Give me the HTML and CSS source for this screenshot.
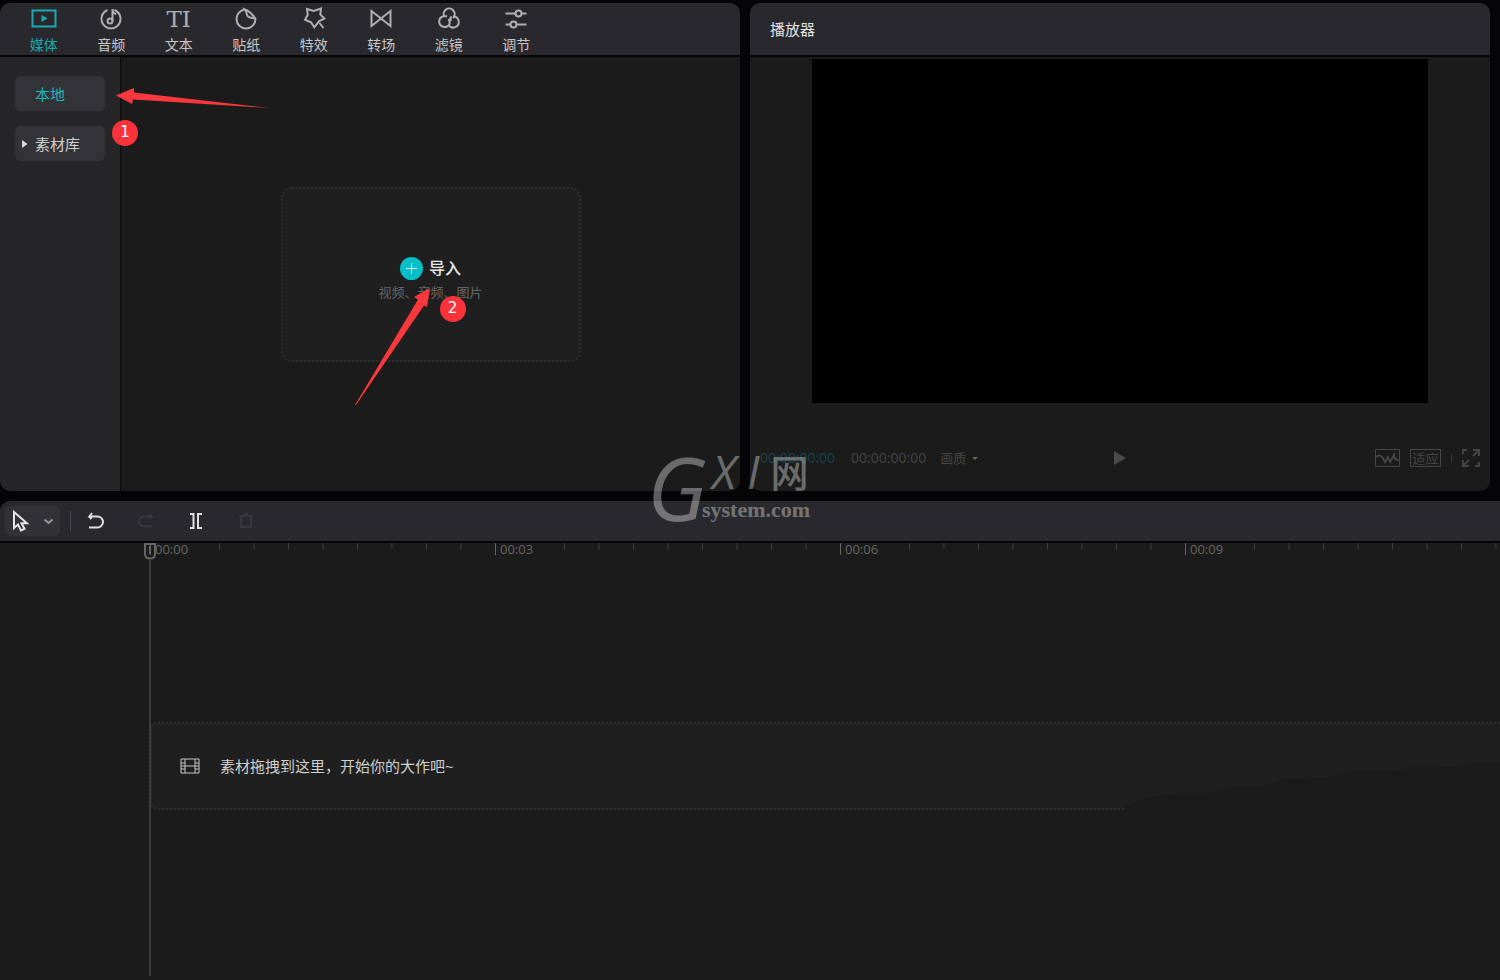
FILE: index.html
```html
<!DOCTYPE html>
<html lang="zh-CN">
<head>
<meta charset="utf-8">
<title>视频编辑器</title>
<link rel="stylesheet" href="styles.css">
</head>
<body>
<div class="app">
  <main class="workspace">
    <section class="panel">
      <nav class="tabs panel-head">
        <button class="tab tab-active"><svg width="26" height="26" viewBox="0 0 26 26"><rect x="1.500" y="4.500" width="23" height="16"/><path class="solid" d="M10.500 9v7l6-3.500z"/></svg>媒体</button>
        <button class="tab"><svg width="26" height="26" viewBox="0 0 26 26"><path d="M9.500 4A9.500 9.500 0 1 0 16.500 4"/><circle cx="12" cy="15" r="2.500"/><path d="M14.500 15V3c0 3 1.200 4.500 3.700 5"/></svg>音频</button>
        <button class="tab"><span class="glyph">TI</span>文本</button>
        <button class="tab"><svg width="26" height="26" viewBox="0 0 26 26"><path d="M12 3.500A9.500 9.500 0 1 0 22.500 13C20 9 16 5 12 3.500c2 2.500 1 5 3 7s5 1 7.500 2.500"/></svg>贴纸</button>
        <button class="tab"><svg width="26" height="26" viewBox="0 0 26 26"><path d="M6 3l6.700 2L20 2.500l-.7 6 4 4-5 2.500-5 6.300-3.300-5L4 13.700 6.700 9zM18.500 17l4 5"/></svg>特效</button>
        <button class="tab"><svg width="26" height="26" viewBox="0 0 26 26"><path d="M3.500 5v15L13 12.500zM22.500 5v15L13 12.500z"/></svg>转场</button>
        <button class="tab"><svg width="26" height="26" viewBox="0 0 26 26"><path d="M8.500 11a5.500 5.500 0 1 1 8.500 1M17 10.500a5.500 5.500 0 1 1-4.500 8.200M15 15c-1-2-.5-3.500.5-4.500M11 10.500a5.500 5.500 0 1 0 0 10c3-1.500 3.500-4.500 1.500-7.500"/></svg>滤镜</button>
        <button class="tab"><svg width="26" height="26" viewBox="0 0 26 26"><path d="M2.500 7.500h10M18.500 7.500h5M2.500 18.500h5M13.500 18.500h10"/><circle cx="15.500" cy="7.500" r="3"/><circle cx="10.500" cy="18.500" r="3"/></svg>调节</button>
      </nav>
      <div class="media">
        <aside class="sidebar">
          <button class="side-item side-active">本地</button>
          <button class="side-item"><svg class="side-caret" width="6" height="8" viewBox="0 0 6 8"><path d="M0 0v8l5.500-4z"/></svg>素材库</button>
          <svg class="arrow arrow-local" width="156" height="22" viewBox="0 0 156 22"><path d="M1 9.500L19 2v4.500L155 22 18 13.500 17 18z"/></svg>
          <span class="badge badge-one">1</span>
        </aside>
        <div class="media-stage">
          <div class="import-box">
            <button class="import"><svg width="23" height="23" viewBox="0 0 23 23"><circle cx="11.500" cy="11.500" r="11.500"/><path d="M11.500 6v11M6 11.500h11"/></svg>导入</button>
            <span class="hint">视频、音频、图片</span>
            <svg class="arrow arrow-import" width="76" height="118" viewBox="0 0 76 118"><path d="M75 0L59 9l4 2.500L0 117h1L69 17.500l3 1.500z"/></svg>
            <span class="badge badge-two">2</span>
          </div>
        </div>
      </div>
    </section>

    <section class="panel">
      <header class="panel-head player-head">播放器</header>
      <div class="player">
        <div class="screen-wrap"><div class="screen"></div></div>
        <div class="controls">
          <div class="times"><span class="now">00:00:00:00</span><span class="total">00:00:00:00</span><button class="quality">画质<svg width="6" height="3" viewBox="0 0 6 3"><path d="M0 0h6L3 3z"/></svg></button></div>
          <button class="play" aria-label="播放"><svg width="12" height="16" viewBox="0 0 12 16"><path d="M0 1v14l12-7z"/></svg></button>
          <div class="view-tools">
            <button aria-label="示波器"><svg width="25" height="18" viewBox="0 0 25 18"><path d="M.5.5h24v17H.500z"/><path class="wave" d="M1 8c2-2 4-2 6 0l3 5 3-5 2 5 4-7c0 4 2 5 5 5"/></svg></button>
            <button class="fit">适应</button>
            <i class="mini-rule"></i>
            <button aria-label="全屏"><svg width="18" height="18" viewBox="0 0 18 18"><path class="wave" d="M1 5V1h4M11 1h6v6M17 13v4h-4M1 11v6h6M11 7l6-6M7 11l-6 6"/></svg></button>
          </div>
        </div>
      </div>
    </section>
  </main>

  <section class="timeline">
    <div class="toolbar">
      <button class="pointer" aria-label="选择"><svg width="17" height="22" viewBox="0 0 17 22"><path d="M2 2v16l4-3.500 3 6 3.500-1.700-3-5.500H15z"/></svg><svg width="11" height="7" viewBox="0 0 11 7"><path class="dim" d="M1.500 1.500l4 3.500 4-3.500"/></svg></button>
      <i class="rule"></i>
      <div class="tools">
        <button aria-label="撤销"><svg width="18" height="18" viewBox="0 0 18 18"><path d="M5 1L2.500 4.500h8a5.500 5.500 0 0 1 0 11H2M2 4l2.500 3"/></svg></button>
        <button class="off" aria-label="恢复"><svg width="18" height="18" viewBox="0 0 18 18"><path d="M12.500 2L15 4.500H7a5 5 0 0 0 0 10h8M15 4.500L13 7"/></svg></button>
        <button aria-label="分割"><svg width="18" height="18" viewBox="0 0 18 18"><path d="M3 2h3.500v14H3M15 2h-4v14h4"/></svg></button>
        <button class="off" aria-label="删除"><svg width="18" height="18" viewBox="0 0 18 18"><path d="M2 4h14M4 4v11h10V4M7 2h4"/></svg></button>
      </div>
    </div>
    <div class="tracks">
      <div class="ruler">
        <div class="seg"><span>00:00</span></div>
        <div class="seg"><span>00:03</span></div>
        <div class="seg"><span>00:06</span></div>
        <div class="seg"><span>00:09</span></div>
      </div>
      <div class="lane">
        <div class="drop">
          <svg width="20" height="16" viewBox="0 0 20 16"><path d="M1 1h18v14H1zM5 1v14M15 1v14M5 8h10M1 5h4M1 8h4M1 11h4M15 5h4M15 8h4M15 11h4"/></svg>
          <span>素材拖拽到这里，开始你的大作吧~</span>
          <svg class="fade" width="376" height="48" viewBox="0 0 376 48"><path d="M0 48V46L10 40 24 35 50 32H82L108 25H138L160 17 206 15 230 9H270L296 4 332 5 352 1H376V48z"/></svg>
        </div>
      </div>
      <div class="playhead"><svg width="12" height="17" viewBox="0 0 12 17"><path d="M1 1h10v10c0 3-2 4.500-5 4.500S1 14 1 11zM6 3v8"/></svg></div>
    </div>
    <div class="mark"><span class="mark-g">G</span><div class="mark-rest"><div class="mark-top"><em>X</em><em>I</em><span>网</span></div><div class="mark-sub">system.com</div></div></div>
  </section>
</div>
</body>
</html>
```
FILE: styles.css
```css
* { box-sizing: border-box; }
body {
  margin: 0;
  background: #050508;
  color: #d0d0d0;
  font-family: "Open Sans", "Noto Sans CJK SC", sans-serif;
  font-size: 15px;
}
button {
  display: flex;
  align-items: center;
  justify-content: center;
  padding: 0;
  border: 0;
  background: none;
  color: inherit;
  font: inherit;
}
svg { display: block; flex: none; fill: none; stroke: currentColor; }
.app {
  display: grid;
  grid-template-rows: minmax(0, 488fr) minmax(0, 479fr);
  gap: 10px;
  height: 100vh;
  min-height: 640px;
  padding-top: 3px;
  overflow: hidden;
}
.workspace {
  display: grid;
  grid-template-columns: 1fr 1fr;
  gap: 10px;
  padding-right: 10px;
}
.panel {
  display: flex;
  flex-direction: column;
  gap: 2px;
  min-height: 0;
  min-width: 0;
}
.panel-head {
  height: 52px;
  flex: none;
  background: #29292d;
  border-radius: 10px 10px 0 0;
}

/* Category tabs */
.tabs {
  display: grid;
  grid-template-columns: repeat(8, 1fr);
  padding: 3px 190px 0 10px;
}
.tab {
  flex-direction: column;
  justify-content: flex-start;
  gap: 3px;
  font-size: 14px;
  line-height: 20px;
  color: #c8c8c8;
}
.tab svg { stroke-width: 2; color: #b0b0b0; }
.tab .solid { fill: currentColor; stroke: none; }
.tab-active, .tab-active svg { color: #1ba9ae; }
.glyph {
  height: 26px;
  font: 23px/26px "DejaVu Serif", serif;
  color: #b0b0b0;
}

/* Media library */
.media { display: flex; flex: 1; min-height: 0; }
.sidebar {
  position: relative;
  display: flex;
  flex-direction: column;
  gap: 15px;
  width: 121px;
  padding: 19px 15px;
  background: #262629;
  border-right: 1px solid #09090a;
  border-radius: 0 0 0 10px;
}
.side-item {
  position: relative;
  justify-content: flex-start;
  height: 35px;
  padding-left: 20px;
  background: #333337;
  border-radius: 5px;
}
.side-active { color: #1fb5ba; }
.side-caret { position: absolute; left: 7px; fill: #ddd; stroke: none; }
.media-stage {
  display: flex;
  flex: 1;
  align-items: center;
  justify-content: center;
  background: #1b1b1b;
  border-radius: 0 0 10px 0;
}
.import-box {
  position: relative;
  display: flex;
  flex-direction: column;
  align-items: center;
  justify-content: center;
  width: 300px;
  height: 175px;
  padding-top: 12px;
  background: #1f1f1f;
  border: 2px dotted #2e2e2e;
  border-radius: 10px;
}
.import { gap: 6px; font-size: 16px; line-height: 24px; font-weight: 500; color: #e8e8e8; }
.import circle { fill: #05bfc8; stroke: none; }
.import path { stroke: #fff; stroke-width: 1; }
.hint { font-size: 13px; line-height: 24px; color: #666; }
.arrow { position: absolute; z-index: 2; fill: #f8383d; stroke: none; }
.arrow-local { left: 115px; top: 29px; }
.arrow-import { left: 72px; top: 99px; }
.badge {
  position: absolute;
  z-index: 2;
  width: 26px;
  height: 26px;
  border-radius: 50%;
  background: #fa333b;
  color: #fff;
  font: 15px/24px "DejaVu Sans", sans-serif;
  text-align: center;
}
.badge-one { left: 112px; top: 63px; }
.badge-two { left: 157px; top: 107px; }

/* Player */
.player-head { display: flex; align-items: center; padding: 0 20px 2px; color: #e4e4e4; }
.player {
  display: flex;
  flex: 1;
  flex-direction: column;
  min-height: 0;
  padding-top: 2px;
  background: #1b1b1b;
  border-radius: 0 0 10px 10px;
}
.screen-wrap { display: flex; flex: 1; justify-content: center; min-height: 0; }
.screen { height: 100%; aspect-ratio: 616 / 344; background: #000; }
.controls {
  display: grid;
  grid-template-columns: 1fr auto 1fr;
  align-items: center;
  height: 88px;
  padding: 22px 10px 0;
  color: #454545;
}
.times { display: flex; align-items: center; font-size: 14px; line-height: 20px; }
.now { margin-right: 16px; color: #154348; }
.total { margin-right: 14px; }
.quality { gap: 6px; font-size: 13px; line-height: 20px; }
.quality svg { fill: #666; stroke: none; }
.play svg { fill: #4b4b4b; stroke: none; }
.view-tools { display: flex; align-items: center; justify-content: flex-end; gap: 10px; }
.wave { stroke-width: 2; }
.fit {
  width: 31px;
  height: 18px;
  border: 1px solid #454545;
  font-size: 13px;
  line-height: 16px;
}
.mini-rule { width: 1px; height: 10px; background: #333; }

/* Timeline */
.timeline { position: relative; display: flex; flex-direction: column; gap: 2px; min-width: 0; }
.toolbar {
  display: flex;
  align-items: center;
  height: 40px;
  flex: none;
  padding-left: 5px;
  background: #29292d;
  border-radius: 10px 0 0 0;
}
.pointer {
  gap: 14px;
  width: 55px;
  height: 30px;
  background: #323236;
  border-radius: 5px;
  color: #e6e6e6;
}
.pointer svg { stroke-width: 2; }
.dim { stroke: #999; }
.rule { width: 1px; height: 20px; margin-left: 10px; background: #48484c; }
.tools { display: flex; }
.tools button { width: 50px; height: 30px; color: #e0e0e0; }
.tools svg { stroke-width: 2; }
.tools .off { color: #38383c; }
.tracks {
  position: relative;
  display: flex;
  flex: 1;
  flex-direction: column;
  min-height: 0;
  padding-left: 150px;
  background: #1b1b1b;
  overflow-x: clip;
}
.ruler { display: flex; height: 20px; flex: none; }
.seg {
  position: relative;
  width: 345px;
  flex: none;
  height: 12px;
  padding-left: 4px;
  border-left: 1px solid #666;
  font-size: 13px;
  line-height: 13px;
  color: #666;
}
.seg::after {
  content: "";
  position: absolute;
  left: 68px;
  right: 0;
  top: 0;
  height: 7px;
  background: linear-gradient(to right, #3a3a3a 1px, transparent 1px) 0 0 / 12.5% 100%;
}
.lane { display: flex; flex: 1; align-items: center; padding-bottom: 12px; }
.drop {
  position: relative;
  display: flex;
  flex: 1;
  align-items: center;
  gap: 20px;
  height: 88px;
  padding-left: 28px;
  background: #1f1f1f;
  border: 2px dotted #2e2e2e;
  border-right: 0;
  border-radius: 8px 0 0 8px;
}
.drop svg { stroke-width: 1; color: #c8c8c8; }
.drop .fade { position: absolute; right: 0; bottom: -2px; fill: #1b1b1b; stroke: none; }
.playhead {
  position: absolute;
  left: 144px;
  top: 0;
  bottom: 4px;
  display: flex;
  flex-direction: column;
  align-items: center;
  width: 12px;
  color: #777;
}
.playhead svg { stroke-width: 2; color: #666; }
.playhead::after { content: ""; flex: 1; width: 2px; background: #3c3c3c; }

/* Site mark */
.mark {
  position: absolute;
  left: 647px;
  top: -58px;
  display: flex;
  color: #fff;
  opacity: 0.35;
  pointer-events: none;
}
.mark-g { width: 55px; font: italic 88px/88px "Open Sans", sans-serif; }
.mark-rest { display: flex; flex-direction: column; }
.mark-top { display: flex; gap: 11px; align-items: center; height: 56px; padding-left: 10px; font-size: 46px; line-height: 48px; }
.mark-top span { font: 500 38px/48px "Noto Sans CJK SC", sans-serif; }
.mark-sub { font: bold 22px/22px "Liberation Serif", serif; }
```
